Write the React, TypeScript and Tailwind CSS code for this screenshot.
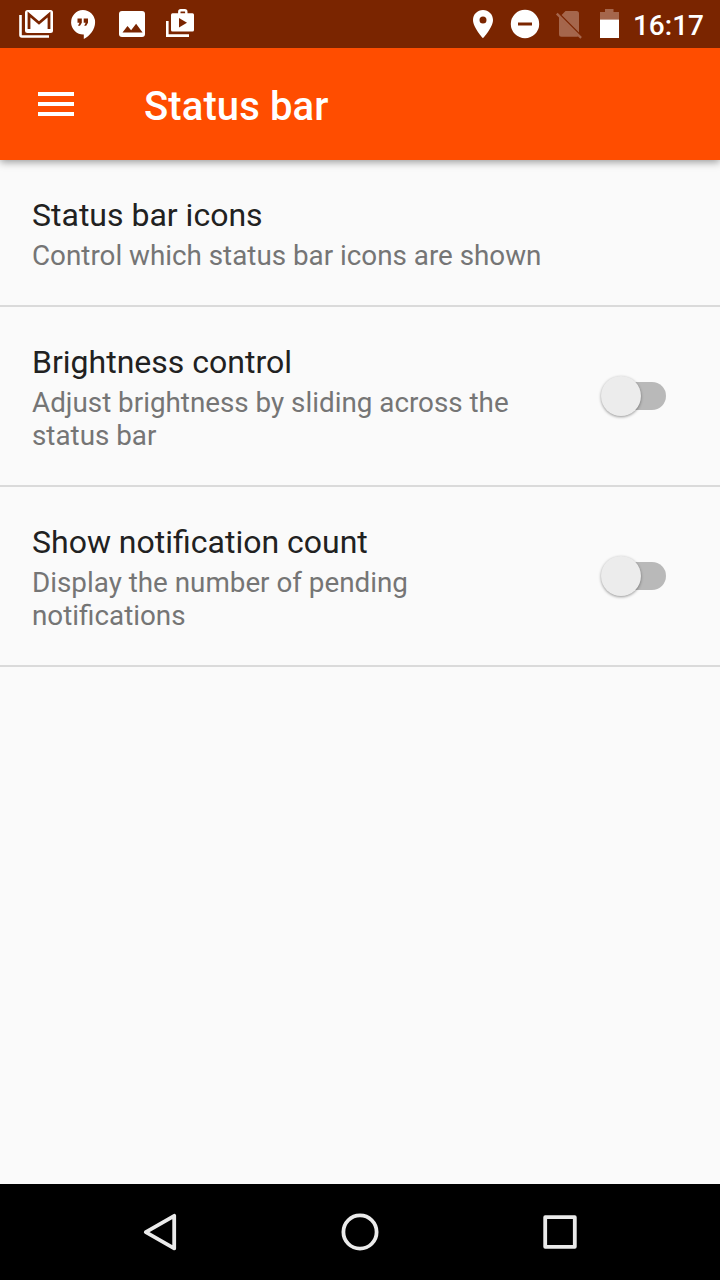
import { useState } from 'react'

interface SwitchProps {
  label: string
  checked: boolean
  onChange: () => void
}

function Switch({ label, checked, onChange }: SwitchProps) {
  return (
    <button
      role="switch"
      aria-label={label}
      aria-checked={checked}
      onClick={onChange}
      className="relative mb-1 flex h-[42px] w-[65px] flex-shrink-0 items-center"
    >
      <span className="ml-[5px] h-7 w-[60px] rounded-full bg-[#b9b9b9]" />
      <span
        className={
          checked
            ? 'absolute right-0 top-[1px] h-10 w-10 rounded-full bg-[#ff4d00] shadow-[0_1px_3px_rgba(0,0,0,0.4)]'
            : 'absolute left-0 top-[1px] h-10 w-10 rounded-full bg-[#ececec] shadow-[0_1px_3px_rgba(0,0,0,0.4)]'
        }
      />
    </button>
  )
}

interface PreferenceProps {
  title: string
  summary: string
  toggle?: boolean
}

function Preference({ title, summary, toggle }: PreferenceProps) {
  const [checked, setChecked] = useState(false)

  return (
    <div className="flex items-center border-b-2 border-[#dadada] pl-8 pr-[54px] pt-9 pb-[33px]">
      <div className="flex-1">
        <h2 className="text-[32px] leading-[38px] text-[#212121]">{title}</h2>
        <p className="mt-[5px] max-w-[520px] text-[27.8px] leading-[33px] text-[#757575]">{summary}</p>
      </div>
      {toggle && <Switch label={title} checked={checked} onChange={() => setChecked(!checked)} />}
    </div>
  )
}

function StatusBar() {
  return (
    <div className="relative z-20 flex h-12 items-center justify-between bg-[#7a2500] pl-[18px] pr-4 text-white">
      <div className="flex">
        {/* Gmail */}
        <svg width="36" height="48" viewBox="18 0 36 48" fill="none">
          <path d="M20.500 15v20q0 1.500 1.500 1.500h27" stroke="#fff" strokeWidth="2.600" />
          <rect x="25" y="10" width="28" height="23" rx="2.500" fill="#fff" />
          <path d="M29 29V14.500l10 8.500 10-8.500V29" stroke="#7a2500" strokeWidth="2.800" />
        </svg>
        {/* Hangouts */}
        <svg className="ml-4" width="28" height="48" viewBox="70.500 0 28 48" fill="#fff">
          <path d="M83.300 10a12.200 12.200 0 1 0 1 24.400V39c6-3 11.300-9.500 11.300-16.800A12.200 12.200 0 0 0 83.300 10z" />
          <path d="M78 18.500h4.300v4.300l-1.800 3h-2l1.500-3h-2zM84.200 18.500h4.300v4.300l-1.800 3h-2l1.500-3h-2z" fill="#7a2500" />
        </svg>
        {/* Photo */}
        <svg className="ml-5" width="28" height="48" viewBox="118 0 28 48">
          <rect x="119" y="11" width="26" height="26" rx="3" fill="#fff" />
          <path d="M122.500 32.500l5-6.500 3.600 4.300 5-6.500 6.500 8.700z" fill="#7a2500" />
        </svg>
        {/* Play movies */}
        <svg className="ml-[19px]" width="30" height="48" viewBox="165 0 30 48" fill="none">
          <path d="M167.300 21v14.600H189" stroke="#fff" strokeWidth="2.600" />
          <path d="M179.300 14v-2.200q0-1.500 1.500-1.500h4q1.500 0 1.500 1.500V14" stroke="#fff" strokeWidth="2.400" />
          <rect x="171" y="13.300" width="23" height="18.200" rx="1.500" fill="#fff" />
          <path d="M179 18v9.500l8-4.700z" fill="#7a2500" />
        </svg>
      </div>

      <div className="flex items-center">
        {/* Location */}
        <svg width="20" height="48" viewBox="473 0 20 48">
          <path
            d="M483 10c-5.600 0-10 4.400-10 10 0 7.500 10 18.200 10 18.200S493 27.500 493 20c0-5.600-4.400-10-10-10zm0 13.500a3.500 3.500 0 1 1 0-7 3.500 3.500 0 0 1 0 7z"
            fill="#fff"
          />
        </svg>
        {/* Do not disturb */}
        <svg className="ml-4" width="32" height="48" viewBox="509 0 32 48">
          <circle cx="525" cy="24" r="14.200" fill="#fff" />
          <path d="M518 22.500h14v3h-14z" fill="#7a2500" />
        </svg>
        {/* No SIM */}
        <svg className="ml-3.5" width="28" height="48" viewBox="555 0 28 48">
          <g fill="#a5664c">
            <path d="M565.500 11h11q2.500 0 2.500 2.500v18.900L561.600 15zM559 16.400L578.600 36q-.6.700-1.600.7h-15.500q-2.500 0-2.500-2.500z" />
            <path d="M557.600 12.800l24.300 24.300-1.600 1.600L556 14.400z" />
          </g>
        </svg>
        {/* Battery */}
        <svg className="ml-4" width="21" height="48" viewBox="599 0 21 48">
          <path d="M600 12h5V9h8.500v3h5.500v7.500h-19z" fill="#a5664c" />
          <path d="M600 19.500h19V38h-19z" fill="#fff" />
        </svg>
        <span className="ml-[13px] mt-0.5 text-[28px] font-medium leading-[33px]">16:17</span>
      </div>
    </div>
  )
}

function NavBar() {
  return (
    <nav className="flex h-24 items-center justify-center gap-[152px] bg-black">
      <button aria-label="Back">
        <svg width="48" height="48" viewBox="0 0 48 48" fill="none" stroke="#ebebeb" strokeWidth="3.800" strokeLinejoin="round">
          <path d="M9.800 24.200L38.200 7.800v32.600z" />
        </svg>
      </button>
      <button aria-label="Home">
        <svg width="48" height="48" viewBox="0 0 48 48" fill="none" stroke="#ebebeb" strokeWidth="3.800">
          <circle cx="24" cy="24" r="16.600" />
        </svg>
      </button>
      <button aria-label="Recent apps">
        <svg width="48" height="48" viewBox="0 0 48 48" fill="none" stroke="#ebebeb" strokeWidth="3.800" strokeLinejoin="round">
          <rect x="9.200" y="9.200" width="29.600" height="29.600" />
        </svg>
      </button>
    </nav>
  )
}

export default function App() {
  return (
    <div className="flex h-[1280px] w-[720px] flex-col bg-[#fafafa] font-['Roboto',sans-serif]">
      <StatusBar />
      <header className="z-10 flex h-28 items-center bg-[#ff4d00] pl-[38px] shadow-[0_2px_8px_rgba(0,0,0,0.4)]">
        <button aria-label="Open menu" className="flex flex-col gap-1.5">
          <span className="h-1 w-9 bg-white" />
          <span className="h-1 w-9 bg-white" />
          <span className="h-1 w-9 bg-white" />
        </button>
        <h1 className="ml-[70px] mt-1 text-[40px] font-medium leading-[47px] tracking-[0.1px] text-white">Status bar</h1>
      </header>
      <main className="flex-1">
        <Preference title="Status bar icons" summary="Control which status bar icons are shown" />
        <Preference title="Brightness control" summary="Adjust brightness by sliding across the status bar" toggle />
        <Preference title="Show notification count" summary="Display the number of pending notifications" toggle />
      </main>
      <NavBar />
    </div>
  )
}
